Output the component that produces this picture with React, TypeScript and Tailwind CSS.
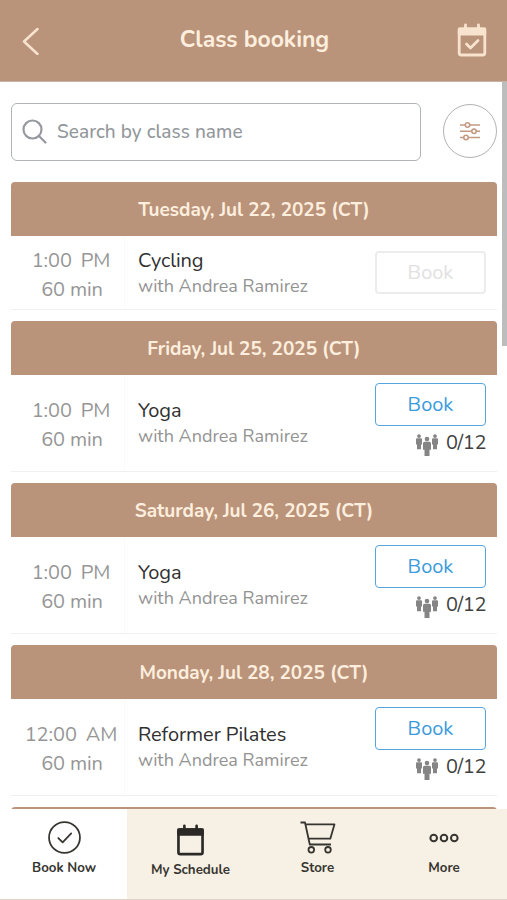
import React from "react";

type ClassItem = {
  date: string;
  time: string;
  period: string;
  name: string;
  spots?: string;
};

const classes: ClassItem[] = [
  { date: "Tuesday, Jul 22, 2025 (CT)", time: "1:00", period: "PM", name: "Cycling" },
  { date: "Friday, Jul 25, 2025 (CT)", time: "1:00", period: "PM", name: "Yoga", spots: "0/12" },
  { date: "Saturday, Jul 26, 2025 (CT)", time: "1:00", period: "PM", name: "Yoga", spots: "0/12" },
  { date: "Monday, Jul 28, 2025 (CT)", time: "12:00", period: "AM", name: "Reformer Pilates", spots: "0/12" },
];

function CalendarIcon({ checked = false, className }: { checked?: boolean; className: string }) {
  return (
    <svg viewBox="0 0 30 34" className={className} fill="none" stroke="currentColor" strokeLinecap="round" strokeLinejoin="round">
      <rect x="2.2" y="6" width="25.6" height="26" rx="2" strokeWidth="2.8" />
      <path d="M2.200 6h25.600v5H2.200z" fill="currentColor" strokeWidth="2.800" />
      <path d="M8.500 1.800v5M21.500 1.800v5" strokeWidth="2.800" />
      {checked && <path d="M9.500 21l4 4 7.500-7.500" strokeWidth="2.800" />}
    </svg>
  );
}

function PeopleIcon() {
  return (
    <svg viewBox="0 0 22 22" className="h-[22px] w-[22px] text-[#858585]" fill="currentColor">
      <circle cx="3" cy="2.100" r="1.900" />
      <path d="M0 5.200q0-1 1-1h4q1 0 1 1V10.500H5v4.700H1v-4.700H0z" />
      <circle cx="19" cy="2.100" r="1.900" />
      <path d="M16 5.200q0-1 1-1h4q1 0 1 1V10.500h-1v4.700h-4v-4.700h-1z" />
      <circle cx="11" cy="5.100" r="2.300" />
      <path d="M7 9.300q0-1.500 1.500-1.500h5q1.500 0 1.500 1.500v6.500h-1.500V22h-5v-6.200H7z" />
    </svg>
  );
}

function ClassBlock({ item }: { item: ClassItem }) {
  return (
    <section className="mb-3 shrink-0">
      <h2 className="flex h-[54px] items-center justify-center rounded-t-[4px] bg-[#ba937b] pt-[2px] text-[19px] font-bold tracking-[-0.05px] text-[#fdeedd]">
        <span>{item.date}</span>
      </h2>
      <div className={`-mb-px flex border-b border-[#f0f0f0] ${item.spots ? "h-[97px]" : "h-[74px]"}`}>
        <div className={`flex w-[114px] flex-col items-center border-r border-[#fafafa] pl-[7px] text-[20px] leading-[29px] tracking-[-0.1px] text-[#969696] ${item.spots ? "pt-[21px]" : "pt-[9.500px]"}`}>
          <div className="flex gap-[9px] whitespace-nowrap">
            <span>{item.time}</span>
            <span>{item.period}</span>
          </div>
          <div className="pl-[2px] tracking-[-0.1px]">60 min</div>
        </div>
        <div className={`flex-1 pl-[13px] ${item.spots ? "pt-[22px]" : "pt-[11px]"}`}>
          <div className="text-[20px] leading-[27px] tracking-[-0.08px] text-[#303030]">{item.name}</div>
          <div className="text-[18px] leading-[24px] text-[#939393]">with Andrea Ramirez</div>
        </div>
        <div className={`mr-[11px] flex w-[111px] flex-col ${item.spots ? "pt-[8px]" : "pt-[15px]"}`}>
          <button
            className={`h-[43px] w-full rounded-[4px] pt-px text-[20px] leading-none ${
              item.spots ? "border border-[#57a3dc] text-[#3b9bdc]" : "border-2 border-[#ececec] text-[#e1e1e1]"
            }`}
          >
            Book
          </button>
          {item.spots && (
            <div className="mt-[4px] flex items-center justify-end gap-[8px] text-[20px] leading-6 tracking-[-0.4px] text-[#404040]">
              <span className="pt-[4px]">
                <PeopleIcon />
              </span>
              <span>{item.spots}</span>
            </div>
          )}
        </div>
      </div>
    </section>
  );
}

export default function App() {
  return (
    <div className="flex h-[900px] w-[507px] flex-col overflow-hidden bg-white font-['Nunito','Lato',sans-serif]">
      <header className="flex h-[82px] shrink-0 items-center justify-between border-b border-[#c6b2a7] bg-[#ba937b] pl-[22px] pr-[20px] text-[#fdeedd]">
        <svg viewBox="0 0 18 28" className="h-[28px] w-[30px]" preserveAspectRatio="xMinYMid" fill="none" stroke="#f8e3cf" strokeWidth="2.500" strokeLinecap="round" strokeLinejoin="round">
          <path d="M15.500 2L2 14.500l13.500 12.500" />
        </svg>
        <h1 className="pb-px text-[23px] font-bold tracking-[-0.05px]">Class booking</h1>
        <CalendarIcon checked className="mb-[2px] h-[34px] w-[30px] text-[#f8e3cf]" />
      </header>

      <div className="flex min-h-0 flex-1 justify-between">
        <main className="ml-[11px] flex w-[486px] flex-col overflow-hidden pt-[21px]">
          <div className="mb-[21px] flex shrink-0 items-center justify-between">
            <label className="flex h-[58px] w-[410px] items-center gap-[10px] rounded-[6px] border border-[#b0b4b7] pl-[10px] text-[19px] font-medium tracking-[0.04px] text-[#92979b]">
              <svg viewBox="0 0 25 25" className="mb-[2px] h-[25px] w-[25px]" fill="none" stroke="#9699a0" strokeWidth="2.200" strokeLinecap="round">
                <circle cx="10.500" cy="10.500" r="9" />
                <path d="M17 17l6.500 6.500" />
              </svg>
              <span>Search by class name</span>
            </label>
            <button className="mb-[2px] flex h-[54px] w-[54px] items-center justify-center rounded-full border border-[#b2b2b2]">
              <svg viewBox="0 0 22 20" className="h-[20px] w-[22px]" fill="white" stroke="#c39a84" strokeWidth="1.600">
                <path d="M1 4h20M1 10.300h20M1 16.500h20" />
                <circle cx="8.500" cy="4" r="2.200" />
                <circle cx="15" cy="10.300" r="2.200" />
                <circle cx="7" cy="16.500" r="2.200" />
              </svg>
            </button>
          </div>
          {classes.map((item) => (
            <ClassBlock key={item.date} item={item} />
          ))}
          <div className="h-[54px] shrink-0 rounded-t-[4px] bg-[#ba937b]" />
        </main>
        <div className="h-[264px] w-[5px] bg-[#bdbdbd]" />
      </div>

      <nav className="flex h-[91px] shrink-0 border-b border-[#dfd3c8] bg-[#f7f0e4] text-[13.300px] font-bold leading-4 text-[#373530]">
        <div className="flex w-[127px] flex-col items-center bg-white pl-px pt-[12px]">
          <svg viewBox="0 0 32 32" className="mb-[6px] h-[33px] w-[33px]" fill="none" stroke="currentColor" strokeWidth="1.700" strokeLinecap="round" strokeLinejoin="round">
            <circle cx="16" cy="16" r="15" />
            <path d="M10 16.500l4.200 4.200L22.500 12" />
          </svg>
          <span>Book Now</span>
        </div>
        <div className="flex w-[127px] flex-col items-center pt-[15px]">
          <CalendarIcon className="mb-[6px] h-[32px] w-[29px] text-[#2a2926]" />
          <span>My Schedule</span>
        </div>
        <div className="flex w-[127px] flex-col items-center pt-[12px]">
          <svg viewBox="0 0 36 33" className="mb-[6px] h-[33px] w-[36px]" fill="none" stroke="currentColor" strokeWidth="1.800" strokeLinejoin="round">
            <path d="M0.500 1.500H5L9.800 23.500H31M6 3.300h28.500l-4.200 14.400H8.600" />
            <circle cx="11.300" cy="28.800" r="2.800" />
            <circle cx="28" cy="28.800" r="2.800" />
          </svg>
          <span>Store</span>
        </div>
        <div className="flex flex-1 flex-col items-center pt-[12px]">
          <svg viewBox="0 0 30 33" className="mb-[6px] h-[33px] w-[30px]" fill="none" stroke="currentColor" strokeWidth="2">
            <circle cx="4.700" cy="17" r="3.300" />
            <circle cx="15" cy="17" r="3.300" />
            <circle cx="25.300" cy="17" r="3.300" />
          </svg>
          <span>More</span>
        </div>
      </nav>
    </div>
  );
}
